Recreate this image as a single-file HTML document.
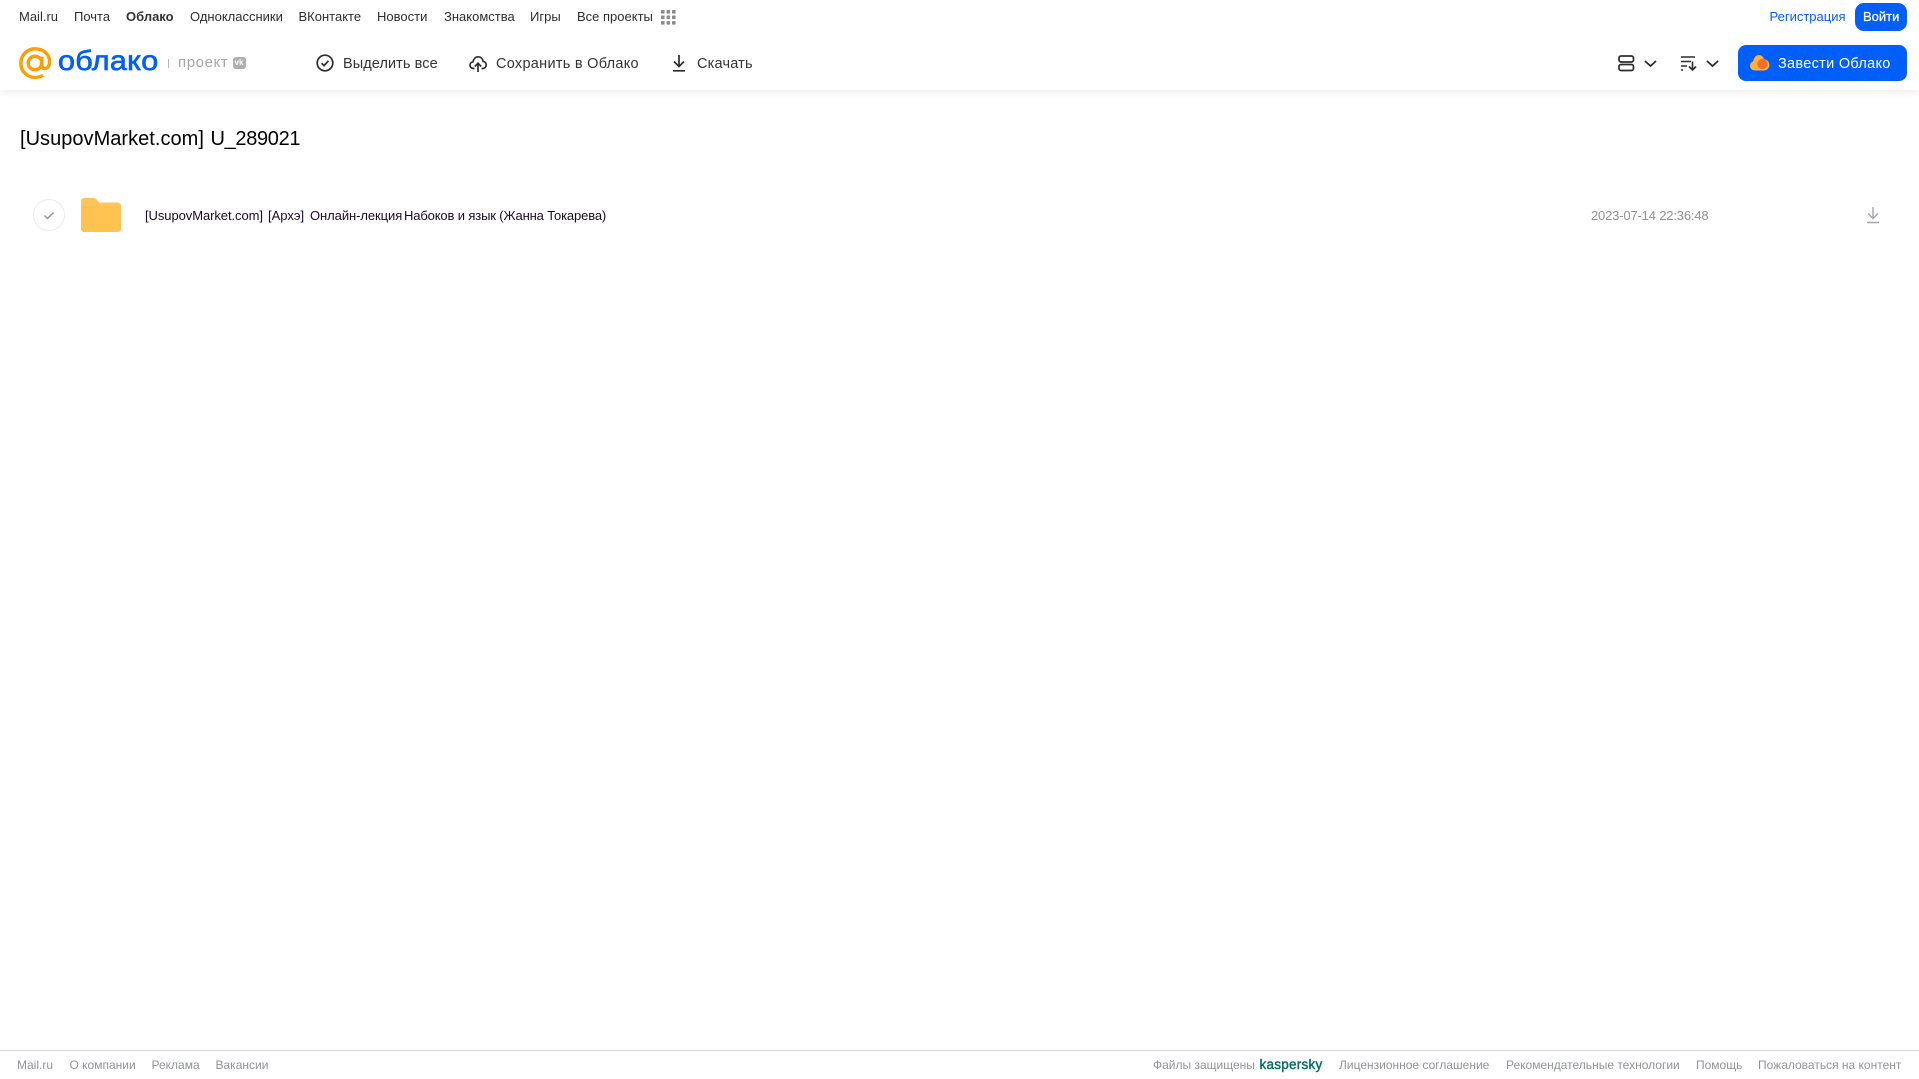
<!DOCTYPE html>
<html lang="ru"><head><meta charset="utf-8"><title>Облако</title>
<style>
html,body{margin:0;padding:0;background:#fff}
body{width:1919px;height:1079px;position:relative;overflow:hidden;font-family:"Liberation Sans",sans-serif}
.t{position:absolute;white-space:nowrap;line-height:20px}
.n{top:7px;font-size:13px;color:#2c2d2e}
.b{top:53.5px;font-size:14.5px;color:#333;letter-spacing:.22px}
.f{top:1055px;font-size:12px;color:#919399}
.r{top:206px;font-size:13px;color:#1b0a1f}
svg{position:absolute;overflow:visible}
#hd{position:absolute;left:0;top:0;width:1919px;height:90px;background:#fff;box-shadow:0 2px 8px rgba(0,0,0,.08)}
#ln{position:absolute;left:0;top:1050px;width:1919px;height:1px;background:#d8d8d8}
.btn{position:absolute;background:#005ff9}
</style></head><body>
<div id="hd"></div>
<div class="t n" style="left:19px">Mail.ru</div>
<div class="t n" style="left:74px">Почта</div>
<div class="t n" style="left:126px;font-weight:bold;color:#333">Облако</div>
<div class="t n" style="left:190px">Одноклассники</div>
<div class="t n" style="left:298.5px">ВКонтакте</div>
<div class="t n" style="left:377px">Новости</div>
<div class="t n" style="left:444px">Знакомства</div>
<div class="t n" style="left:530px">Игры</div>
<div class="t n" style="left:577px">Все проекты</div>
<svg style="left:661px;top:10px" width="15" height="15" fill="#8a8c91"><rect x="0" y="0" width="3.6" height="3.6" rx=".6"/><rect x="5.5" y="0" width="3.6" height="3.6" rx=".6"/><rect x="11" y="0" width="3.6" height="3.6" rx=".6"/><rect x="0" y="5.5" width="3.6" height="3.6" rx=".6"/><rect x="5.5" y="5.5" width="3.6" height="3.6" rx=".6"/><rect x="11" y="5.5" width="3.6" height="3.6" rx=".6"/><rect x="0" y="11" width="3.6" height="3.6" rx=".6"/><rect x="5.5" y="11" width="3.6" height="3.6" rx=".6"/><rect x="11" y="11" width="3.6" height="3.6" rx=".6"/></svg>

<div class="t n" style="left:1769.5px;color:#005ff9">Регистрация</div>
<div class="btn" style="left:1855px;top:3px;width:52px;height:28px;border-radius:9px"></div>
<div class="t n" style="left:1863px;color:#fff;-webkit-text-stroke:.25px #fff">Войти</div>

<svg style="left:19px;top:47px" width="33" height="33" fill="none" stroke="#ff9e00" stroke-width="3.4"><circle cx="16" cy="16" r="6.8"/><path d="M22.8 9.8V18c0 5 6.5 5 7.6-1.3C31.6 8 25 1.8 16 1.8 8 1.8 1.8 8.5 1.8 16.2 1.8 24.6 8.5 30.4 16 30.4c3.3 0 5.7-.8 8-2.1"/></svg>
<div class="t" style="left:58px;top:45px;font-size:28px;line-height:32px;color:#005ff9;letter-spacing:.3px;-webkit-text-stroke:.7px #005ff9;transform:scaleX(1.09);transform-origin:0 50%">облако</div>
<div style="position:absolute;left:168px;top:59px;width:1px;height:9px;background:#b5b7bb"></div>
<div class="t" style="left:178px;top:53px;font-size:15px;color:#a5a7ab;letter-spacing:.6px">проект</div>
<div style="position:absolute;left:233px;top:57px;width:13px;height:12px;border-radius:3px;background:#adafb3"></div>
<div class="t" style="left:234.5px;top:53px;font-size:8px;font-weight:bold;color:#fff;line-height:20px">vk</div>

<svg style="left:316px;top:54px" width="18" height="18" fill="none" stroke="#2c2d2e" stroke-width="1.7"><circle cx="9" cy="9" r="7.8"/><path d="M5.6 9.2l2.4 2.4 4.5-4.8"/></svg>
<div class="t b" style="left:343px;letter-spacing:.08px">Выделить все</div>
<svg style="left:469px;top:55px" width="18" height="18" fill="none" stroke="#2c2d2e" stroke-width="1.7"><path d="M5.5 13.5H4.4C2.4 13.5 1 12 1 10.2 1 8.4 2.2 7 4 6.8 4.6 3.8 6.6 1.8 9.2 1.8c2.6 0 4.5 1.9 4.9 4.6 1.9.2 3.1 1.8 3.1 3.6 0 1.9-1.4 3.5-3.3 3.5h-1.4"/><path d="M9 17V8.5M5.8 11.5L9 8.2l3.2 3.3"/></svg>
<div class="t b" style="left:496px;letter-spacing:.28px">Сохранить в Облако</div>
<svg style="left:672px;top:54px" width="14" height="18" fill="none" stroke="#2c2d2e" stroke-width="1.7"><path d="M7 1v11M2 7.5l5 5 5-5M1 16.8h12"/></svg>
<div class="t b" style="left:697px;letter-spacing:.2px">Скачать</div>

<svg style="left:1618px;top:55px" width="17" height="17" fill="none" stroke="#2c2d2e" stroke-width="1.7"><rect x="1" y="1" width="14.5" height="6" rx="2"/><rect x="1" y="9.5" width="14.5" height="6" rx="2"/></svg>
<svg style="left:1644px;top:60px" width="13" height="8" fill="none" stroke="#2c2d2e" stroke-width="1.8"><path d="M1 1l5.5 5L12 1"/></svg>
<svg style="left:1681px;top:55px" width="17" height="17" fill="none" stroke="#2c2d2e" stroke-width="1.4"><path d="M0 2h14M0 6.5h10M0 11h6M0 15h2"/><path d="M11.5 6.5v8.5M8 11.5l3.5 3.5 3.5-3.5" stroke-width="1.6"/></svg>
<svg style="left:1706px;top:60px" width="13" height="8" fill="none" stroke="#2c2d2e" stroke-width="1.8"><path d="M1 1l5.5 5L12 1"/></svg>

<div class="btn" style="left:1738px;top:45px;width:169px;height:36px;border-radius:8px"></div>
<svg style="left:1750px;top:54px" width="20" height="18"><path d="M5 16.5C2 16.5 0 14.4 0 11.8c0-2.2 1.4-3.9 3.2-4.4C3.8 3.6 6 1 8.8 1c2.6 0 4.6 1.8 5.2 4.2 3 .2 5.4 2.7 5.4 5.8 0 3-2.4 5.5-5.4 5.5z" fill="#ffb13b"/><circle cx="12.5" cy="10" r="5.2" fill="#f4702a"/></svg>
<div class="t" style="left:1778px;top:53.5px;font-size:14.5px;color:#fff;letter-spacing:.3px">Завести Облако</div>

<div class="t" style="left:20px;top:125.5px;font-size:20px;line-height:26px;color:#000;letter-spacing:.03px">[UsupovMarket.com]</div>
<div class="t" style="left:210.5px;top:125.5px;font-size:20px;line-height:26px;color:#000;letter-spacing:-.33px">U_289021</div>

<svg style="left:33px;top:199px" width="32" height="32" fill="none"><circle cx="16" cy="16" r="15.5" stroke="#ececec"/><path d="M11.5 16.5l3 3 6-6" stroke="#8f9093" stroke-width="1.4"/></svg>
<svg style="left:81px;top:197px" width="41" height="36"><path d="M0 4a3 3 0 0 1 3-3h9c2 0 3 .8 4 2l2 2.5h19a3 3 0 0 1 3 3V32a3 3 0 0 1-3 3H3a3 3 0 0 1-3-3z" fill="#ffc55c"/><path d="M0 9h37a3 3 0 0 1 3 3v20a3 3 0 0 1-3 3H3a3 3 0 0 1-3-3z" fill="#ffc34f"/></svg>
<div class="t r" style="left:145px;letter-spacing:-.07px">[UsupovMarket.com]</div>
<div class="t r" style="left:268px">[Архэ]</div>
<div class="t r" style="left:310px;letter-spacing:-.07px">Онлайн-лекция</div>
<div class="t r" style="left:404px;letter-spacing:-.14px">Набоков и язык (Жанна Токарева)</div>
<div class="t" style="left:1591px;top:206px;font-size:13px;color:#8f9094;letter-spacing:-.17px">2023-07-14 22:36:48</div>
<svg style="left:1866px;top:206px" width="14" height="18" fill="none" stroke="#a3a4a8" stroke-width="1.4"><path d="M7 1v11M2 7.5l5 5 5-5M1 16.5h12"/></svg>

<div id="ln"></div>
<div class="t f" style="left:17px">Mail.ru</div>
<div class="t f" style="left:69.5px">О компании</div>
<div class="t f" style="left:151.5px">Реклама</div>
<div class="t f" style="left:215.5px">Вакансии</div>
<div class="t f" style="left:1153px">Файлы защищены</div>
<div class="t f" style="left:1259.5px;font-size:13.5px;color:#006d5c;-webkit-text-stroke:.4px #006d5c;letter-spacing:.25px">kaspersky</div>
<div class="t f" style="left:1339px">Лицензионное соглашение</div>
<div class="t f" style="left:1506px">Рекомендательные технологии</div>
<div class="t f" style="left:1696px">Помощь</div>
<div class="t f" style="left:1758px">Пожаловаться на контент</div>
</body></html>
